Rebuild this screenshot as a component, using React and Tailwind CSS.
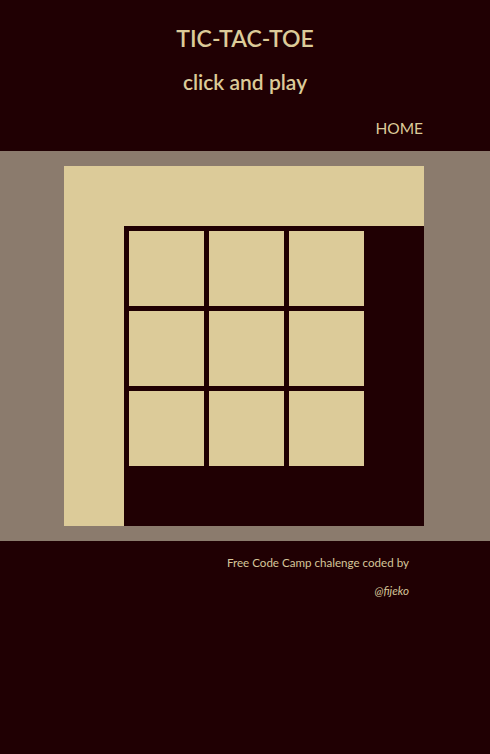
import React from 'react';

const cells = [0, 1, 2, 3, 4, 5, 6, 7, 8];

const App = () => {
  return (
    <div className="min-h-[754px] bg-[#200003] text-[#dccb99]" style={{ fontFamily: '"Source Sans Pro", Lato, sans-serif' }}>
      {/* header */}
      <header className="h-[151px] flex flex-col items-center">
        <h1 className="mt-[23px] text-[23px] leading-[30px] font-semibold">TIC-TAC-TOE</h1>
        <h2 className="mt-[17px] text-[21px] leading-[24px] font-semibold">click and play</h2>
        <nav className="w-full flex justify-end pr-[67px] mt-[23px]">
          <a href="#" className="text-[15.5px] leading-[22px]">HOME</a>
        </nav>
      </header>

      {/* board area */}
      <main className="bg-[#8b7b6d] py-[15px] pl-[64px]">
        <div className="w-[360px] h-[360px] bg-[#dccb99] pl-[60px] pt-[60px]">
          <div className="w-[300px] h-[300px] bg-[#200003] pl-[5px] pt-[5px]">
            <div className="grid grid-cols-[75px_75px_75px] gap-[5px]">
              {cells.map((c) => (
                <div key={c} className="w-[75px] h-[75px] bg-[#dccb99]" />
              ))}
            </div>
          </div>
        </div>
      </main>

      {/* footer */}
      <footer className="flex flex-col items-end pr-[81px] pt-[14px] text-[11.6px] text-[#d6c69a]">
        <p className="leading-[16px]">Free Code Camp chalenge coded by</p>
        <p className="leading-[16px] mt-[12px] italic">@fijeko</p>
      </footer>
    </div>
  );
};

export default App;
